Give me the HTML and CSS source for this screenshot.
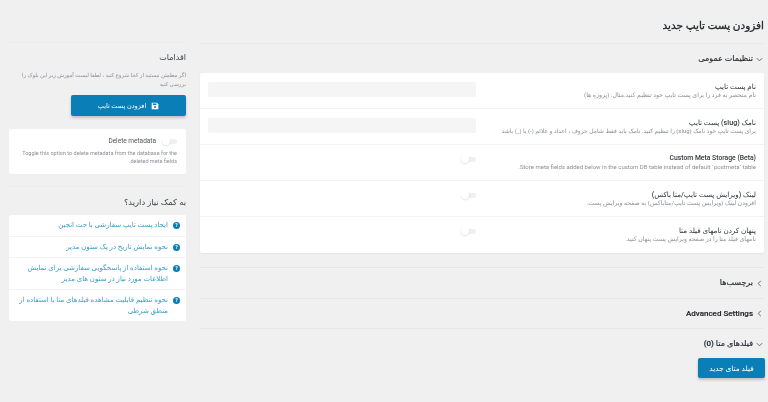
FILE: index.html
```html
<!DOCTYPE html>
<html lang="fa" dir="rtl">

<head>
  <meta charset="UTF-8" />
  <title>افزودن پست تایپ جدید</title>
  <link rel="stylesheet" href="styles.css">
</head>

<body>
  <main class="main-content">
    <h1 class="page-title">افزودن پست تایپ جدید</h1>

    <section class="panel panel-open">
      <h2 class="panel-head">
        <svg class="chevron" viewBox="0 0 10 10"><path d="M2 3.5 5 6.5 8 3.5" /></svg>
        تنظیمات عمومی
      </h2>
      <div class="card settings">
        <div class="row">
          <div class="row-text">
            <div class="row-label">نام پست تایپ</div>
            <div class="row-desc">نام منحصر به فرد را برای پست تایپ خود تنظیم کنید.مثال: (پروژه ها)</div>
          </div>
          <div class="field"></div>
        </div>
        <div class="row">
          <div class="row-text">
            <div class="row-label">نامک (slug) پست تایپ</div>
            <div class="row-desc row-desc-long">برای پست تایپ خود نامک (slug) را تنظیم کنید. نامک باید فقط شامل حروف ، اعداد و علائم (-) یا (_) باشد</div>
          </div>
          <div class="field"></div>
        </div>
        <div class="row">
          <div class="row-text">
            <div class="row-label row-label-en">Custom Meta Storage (Beta)</div>
            <div class="row-desc row-desc-long">Store meta fields added below in the custom DB table instead of default `postmeta` table.</div>
          </div>
          <div class="toggle-wrap"><span class="toggle"></span></div>
        </div>
        <div class="row">
          <div class="row-text">
            <div class="row-label">لینک (ویرایش پست تایپ/متا باکس)</div>
            <div class="row-desc">افزودن لینک (ویرایش پست تایپ/متاباکس) به صفحه ویرایش پست.</div>
          </div>
          <div class="toggle-wrap"><span class="toggle"></span></div>
        </div>
        <div class="row">
          <div class="row-text">
            <div class="row-label">پنهان کردن نامهای فیلد متا</div>
            <div class="row-desc">نامهای فیلد متا را در صفحه ویرایش پست پنهان کنید.</div>
          </div>
          <div class="toggle-wrap"><span class="toggle"></span></div>
        </div>
      </div>
    </section>

    <section class="panel">
      <h2 class="panel-head">
        <svg class="chevron" viewBox="0 0 10 10"><path d="M6.5 2 3.5 5 6.5 8" /></svg>
        برچسب‌ها
      </h2>
    </section>
    <section class="panel">
      <h2 class="panel-head">
        <svg class="chevron" viewBox="0 0 10 10"><path d="M6.5 2 3.5 5 6.5 8" /></svg>
        Advanced Settings
      </h2>
    </section>
    <section class="panel">
      <h2 class="panel-head">
        <svg class="chevron" viewBox="0 0 10 10"><path d="M2 3.5 5 6.5 8 3.5" /></svg>
        فیلدهای متا (0)
      </h2>
      <button class="btn btn-meta">فیلد متای جدید</button>
    </section>
  </main>

  <aside class="sidebar">
    <div class="side-block">
      <h3 class="side-title">اقدامات</h3>
      <p class="side-note">اگر مطمئن نیستید از کجا شروع کنید ، لطفا لیست آموزش زیر این بلوک را بررسی کنید</p>
      <button class="btn btn-add">
        <svg class="save-icon" viewBox="0 0 12 12">
          <path d="M1.5 1h7.3L11 3.2v7.3c0 .3-.2.5-.5.5h-9a.5.5 0 0 1-.5-.5v-9c0-.3.2-.5.5-.5z" />
          <rect class="cut" x="3" y="2.2" width="5" height="2.4" />
          <circle class="cut" cx="6" cy="7.6" r="1.5" />
        </svg>
        افزودن پست تایپ
      </button>
      <div class="card meta-card">
        <div class="meta-top">
          <span class="toggle"></span>
          <span class="meta-label">Delete metadata</span>
        </div>
        <p class="meta-desc">Toggle this option to delete metadata from the database for the deleted meta fields.</p>
      </div>
    </div>

    <div class="side-block help-block">
      <h3 class="side-title help-title">به کمک نیاز دارید؟</h3>
      <ul class="card help-list">
        <li><span class="help-mark">?</span><a href="#">ایجاد پست تایپ سفارشی با جت انجین</a></li>
        <li><span class="help-mark">?</span><a href="#">نحوه نمایش تاریخ در یک ستون مدیر</a></li>
        <li><span class="help-mark">?</span><a href="#">نحوه استفاده از پاسخگویی سفارشی برای نمایش اطلاعات مورد نیاز در ستون های مدیر</a></li>
        <li><span class="help-mark">?</span><a href="#">نحوه تنظیم قابلیت مشاهده فیلدهای متا با استفاده از منطق شرطی</a></li>
      </ul>
    </div>
  </aside>
</body>

</html>
```

FILE: styles.css
```css
* {
  box-sizing: border-box;
}

html,
body {
  height: 402px;
  overflow: hidden;
}

body {
  background: #f0f0f1;
  color: #23282d;
  font-family: Roboto, 'DejaVu Sans', sans-serif;
  margin: 0;
  padding-right: 4px;
  padding-left: 9px;
  display: flex;
  gap: 14px;
}

.main-content {
  flex: 1;
  min-width: 0;
  filter: blur(0.3px);
}

.page-title {
  font-size: 10.5px;
  font-weight: 400;
  -webkit-text-stroke: 0.3px #23282d;
  line-height: 16px;
  margin: 0;
  padding: 18px 0 9px;
  border-bottom: 1px solid #e9e9ea;
}

.panel {
  border-bottom: 1px solid #e6e6e8;
  height: 30.5px;
}

.panel-open {
  height: 224px;
}

.panel:last-child {
  border-bottom: none;
}

.panel-head {
  display: flex;
  align-items: center;
  gap: 2px;
  font-size: 8px;
  font-weight: 500;
  -webkit-text-stroke: 0.15px #23282d;
  line-height: 12px;
  margin: 0;
  padding: 9px 0;
}

.panel-open .panel-head {
  padding: 9px 0 8px;
}

.chevron {
  width: 9px;
  height: 9px;
  fill: none;
  stroke: #555d66;
  stroke-width: 1;
}

.card {
  background: #fff;
  border-radius: 2px;
}

.settings {
  box-shadow: 0 1px 2px #0000000d;
}

.row {
  height: 36px;
  padding: 9px 8px 0;
  border-bottom: 1px solid #f3f3f3;
  display: flex;
  justify-content: space-between;
}

.row:last-child {
  border-bottom: none;
}

.row-label {
  font-size: 7.2px;
  font-weight: 500;
  line-height: 9px;
  color: #32373c;
}

.row-label-en {
  font-size: 6.8px;
}

.row-desc {
  font-size: 6.2px;
  line-height: 8px;
  color: #8c8f94;
}

.row-desc-long {
  font-size: 6px;
}

.field {
  width: 268px;
  height: 15px;
  background: #f5f5f6;
  border-radius: 2px;
}

.toggle-wrap {
  width: 268px;
  padding-top: 1px;
}

.toggle {
  display: block;
  position: relative;
  width: 15px;
  height: 5px;
  margin-top: 2px;
  background: #f0f0f1;
  border-radius: 3px;
}

.toggle::after {
  content: "";
  position: absolute;
  left: 0;
  top: -2px;
  width: 8px;
  height: 8px;
  background: #fff;
  border-radius: 50%;
  box-shadow: 0 1px 2px #0000001f;
}

.btn {
  display: flex;
  align-items: center;
  justify-content: center;
  gap: 5px;
  border: none;
  border-radius: 2px;
  background: #0a7eb7;
  color: #fff;
  font-family: inherit;
  font-size: 6.5px;
  box-shadow: 0 2px 3px #00000033;
}

.btn-meta {
  width: 67px;
  height: 20px;
  margin-top: -1px;
  margin-right: -1px;
  font-size: 7.4px;
}

.btn-add {
  width: 115px;
  height: 21px;
}

.save-icon {
  width: 8px;
  height: 8px;
  fill: #fff;
}

.save-icon .cut {
  fill: #0a7eb7;
}

.sidebar {
  width: 177px;
  flex: none;
  filter: blur(0.3px);
}

.side-block {
  margin-top: 42px;
  padding-top: 9px;
  border-top: 1px solid #ececed;
}

.help-block {
  margin-top: 12px;
  padding-top: 9px;
}

.side-title {
  font-size: 8px;
  font-weight: 400;
  line-height: 12px;
  color: #3c434a;
  margin: 0 0 7px;
}

.help-title {
  font-size: 8.4px;
}

.side-note {
  font-size: 5.5px;
  line-height: 9px;
  color: #8c8f94;
  margin: 0 0 6px;
}

.meta-card {
  margin-top: 13px;
  padding: 8px 9px;
  height: 45px;
}

.meta-top {
  display: flex;
  align-items: center;
  gap: 6px;
  margin-bottom: 3px;
}

.meta-top .toggle {
  margin-top: 0;
}

.meta-label {
  font-size: 6.5px;
  font-weight: 400;
  color: #50575e;
  line-height: 9px;
}

.meta-desc {
  font-size: 5.5px;
  line-height: 8px;
  color: #8c8f94;
  margin: 0;
}

.help-list {
  list-style: none;
  margin: 0;
  padding: 0;
}

.help-list li {
  display: flex;
  gap: 5px;
  padding: 5px 6px 5px 9px;
  border-bottom: 1px solid #f3f3f3;
  font-size: 7px;
  line-height: 10.5px;
}

.help-list li:last-child {
  border-bottom: none;
}

.help-list a {
  color: #3a9cc5;
  text-decoration: none;
}

.help-mark {
  flex: none;
  width: 7px;
  height: 7px;
  margin-top: 2px;
  background: #0a7eb7;
  color: #fff;
  border-radius: 50%;
  font-size: 5px;
  font-weight: bold;
  line-height: 7px;
  text-align: center;
}
```
